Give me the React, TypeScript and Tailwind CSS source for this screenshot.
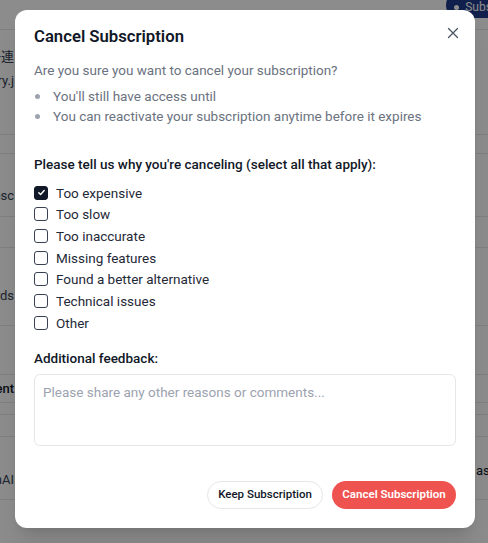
import React, { useState } from 'react';

const reasons = [
    'Too expensive',
    'Too slow',
    'Too inaccurate',
    'Missing features',
    'Found a better alternative',
    'Technical issues',
    'Other',
];

// rows of the page behind the dialog, mostly hidden under the overlay
const bgRows = [
    { h: 'h-[105px]', pl: 'pt-[17px]', left: ['一連', 'ry.j'], pr: '', right: '' },
    { h: 'h-[19px]', pl: '', left: [], pr: '', right: '' },
    { h: 'h-[63px]', pl: 'pt-[32px]', left: ['bsc'], pr: '', right: '' },
    { h: 'h-[31px]', pl: '', left: [], pr: '', right: '' },
    { h: 'h-[78px]', pl: 'pt-[38px]', left: ['ords'], pr: '', right: '' },
    { h: 'h-[49px]', pl: '', left: [], pr: '', right: '' },
    { h: 'h-[28px]', pl: 'pt-[4px]', left: ['ent'], pr: '', right: '' },
    { h: 'h-[12px]', pl: '', left: [], pr: '', right: '' },
    { h: 'h-[22px]', pl: '', left: [], pr: '', right: '' },
    { h: 'h-[63px]', pl: 'pt-[33px]', left: ['nAI'], pr: 'pt-[24px]', right: 'ash' },
];

function Background() {
    return (
        <div className="min-h-[543px] bg-white text-[13px] leading-5 text-gray-700">
            <div className="flex h-[30px] items-start justify-end border-b border-gray-200">
                <div className="-mr-[49px] -mt-2 flex h-[26px] items-center gap-[6px] rounded-full bg-[#1e3a8a] pl-[8px] pr-3 pt-[4px] text-[12px] text-white">
                    <span className="h-[5px] w-[5px] rounded-full bg-white" />
                    Subscribed
                </div>
            </div>
            {bgRows.map((row, i) => (
                <div
                    key={i}
                    className={`flex ${row.h} items-start justify-between border-b border-gray-200`}
                >
                    <div className={`flex w-[14px] flex-col items-end gap-[4px] ${row.pl}`}>
                        {row.left.map((t) => (
                            <span key={t} className={`whitespace-nowrap ${t === 'ent' ? 'font-medium text-gray-900' : ''}`}>
                                {t}
                            </span>
                        ))}
                    </div>
                    {row.right && (
                        <span className={`w-[12px] whitespace-nowrap text-gray-900 ${row.pr}`}>{row.right}</span>
                    )}
                </div>
            ))}
        </div>
    );
}

export default function App() {
    const [selected, setSelected] = useState<string[]>(['Too expensive']);

    const toggle = (r: string) => {
        setSelected((s) => (s.includes(r) ? s.filter((x) => x !== r) : [...s, r]));
    };

    return (
        <div
            className="relative h-[543px] w-[488px] overflow-hidden"
            style={{ fontFamily: 'Roboto, "Noto Sans CJK JP", sans-serif' }}
        >
            <Background />
            <div className="absolute inset-0 bg-black/45">
                <div className="ml-[15px] mt-[10px] flex h-[518px] w-[460px] flex-col rounded-xl bg-white px-[19px] pt-[15px] shadow-xl">
                    <div className="flex items-center justify-between">
                        <h2 className="text-[16.7px] font-semibold leading-6 text-[#111827]">
                            Cancel Subscription
                        </h2>
                        <button className="-mr-1 mt-[-8px] text-gray-600">
                            <svg width="14" height="14" viewBox="0 0 14 14" fill="none" stroke="currentColor" strokeWidth="1.3" strokeLinecap="round">
                                <path d="M2.5 2.5l9 9M11.5 2.5l-9 9" />
                            </svg>
                        </button>
                    </div>

                    <p className="mt-[11px] text-[13.5px] leading-5 text-[#6b7280]">
                        Are you sure you want to cancel your subscription?
                    </p>
                    <ul className="mt-[6px] text-[13.5px] leading-5 text-[#6b7280]">
                        <li className="flex items-center">
                            <span className="ml-[1px] mr-[13px] h-[5px] w-[5px] rounded-full bg-[#9ca3af]" />
                            You'll still have access until
                        </li>
                        <li className="flex items-center">
                            <span className="ml-[1px] mr-[13px] h-[5px] w-[5px] rounded-full bg-[#9ca3af]" />
                            You can reactivate your subscription anytime before it expires
                        </li>
                    </ul>

                    <p className="mt-[28px] text-[13.5px] font-medium leading-5 text-[#111827]">
                        Please tell us why you're canceling (select all that apply):
                    </p>
                    <div className="mt-[8px] flex flex-col">
                        {reasons.map((r) => {
                            const on = selected.includes(r);
                            return (
                                <label
                                    key={r}
                                    className="flex h-[21.67px] cursor-pointer items-center gap-[8px] text-[13.5px] text-[#1f2937]"
                                    onClick={() => toggle(r)}
                                >
                                    <span
                                        className={`flex h-[14px] w-[14px] items-center justify-center rounded-[3px] border ${
                                            on ? 'border-[#111827] bg-[#111827]' : 'border-[#374151] bg-white'
                                        }`}
                                    >
                                        {on && (
                                            <svg width="9" height="9" viewBox="0 0 10 10" fill="none" stroke="white" strokeWidth="1.6" strokeLinecap="round" strokeLinejoin="round">
                                                <path d="M2 5.2l2 2 4-4.4" />
                                            </svg>
                                        )}
                                    </span>
                                    {r}
                                </label>
                            );
                        })}
                    </div>

                    <p className="mt-[14px] text-[13.5px] font-medium leading-5 text-[#111827]">
                        Additional feedback:
                    </p>
                    <textarea
                        className="mt-[6px] block h-[72px] w-full resize-none rounded-md border border-[#e5e7eb] px-[8px] py-[7px] text-[13.5px] leading-5 text-gray-800 placeholder:text-[#9ca3af] focus:outline-none"
                        placeholder="Please share any other reasons or comments..."
                    />

                    <div className="mt-[35px] flex justify-end gap-[9px]">
                        <button className="h-[28px] w-[116px] rounded-full border border-[#e5e7eb] bg-white text-[11.5px] font-medium text-[#111827]">
                            Keep Subscription
                        </button>
                        <button className="h-[28px] w-[124px] rounded-full bg-[#ef5350] text-[11.5px] font-semibold text-white">
                            Cancel Subscription
                        </button>
                    </div>
                </div>
            </div>
        </div>
    );
}
